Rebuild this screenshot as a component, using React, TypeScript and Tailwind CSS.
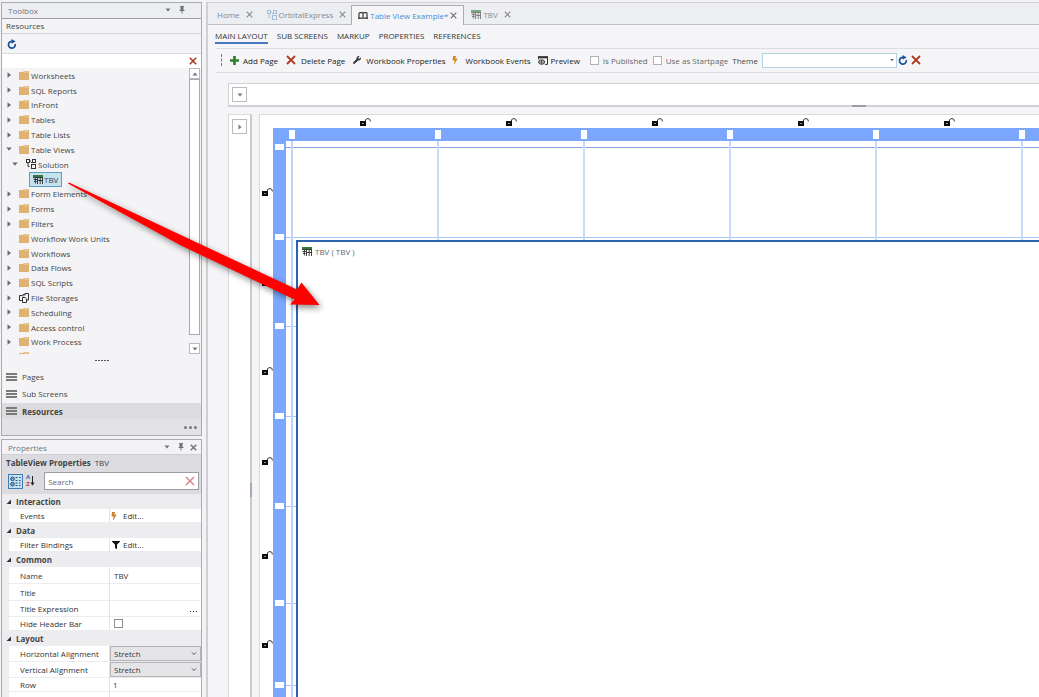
import React, { useState } from 'react';
import { FaWrench, FaBolt, FaFilter } from 'react-icons/fa';

interface TreeNode {
  label: string;
  state: 'closed' | 'open' | 'leaf';
  icon?: 'folder' | 'solution' | 'storage';
}

const TREE_TOP: TreeNode[] = [
  { label: 'Worksheets', state: 'closed' },
  { label: 'SQL Reports', state: 'closed' },
  { label: 'InFront', state: 'closed' },
  { label: 'Tables', state: 'closed' },
  { label: 'Table Lists', state: 'closed' },
  { label: 'Table Views', state: 'open' },
];

const TREE_BOTTOM: TreeNode[] = [
  { label: 'Form Elements', state: 'closed' },
  { label: 'Forms', state: 'closed' },
  { label: 'Filters', state: 'closed' },
  { label: 'Workflow Work Units', state: 'leaf' },
  { label: 'Workflows', state: 'closed' },
  { label: 'Data Flows', state: 'closed' },
  { label: 'SQL Scripts', state: 'closed' },
  { label: 'File Storages', state: 'closed', icon: 'storage' },
  { label: 'Scheduling', state: 'closed' },
  { label: 'Access control', state: 'closed' },
  { label: 'Work Process', state: 'closed' },
];

const COLUMNS = [0, 1, 2, 3, 4, 5];
const ROW_HEIGHTS = ['h-[90px]', 'h-[89px]', 'h-[90px]', 'h-[90px]', 'h-[97px]', 'h-[82px]', 'h-[90px]'];

/* ---------- icons ---------- */

const Caret = ({ className = '' }: { className?: string }) => (
  <svg viewBox="0 0 6 4" className={`h-1 w-1.5 shrink-0 ${className}`}>
    <path d="M0.5 0.5h5L3 3.5z" fill="currentColor" />
  </svg>
);

const Expander = ({ state }: { state: TreeNode['state'] }) => (
  <svg viewBox="0 0 6 6" className="h-1.5 w-1.5 shrink-0 text-[#6b6b6b]">
    {state === 'closed' && <path d="M1.5 0.3v5.4l3.5-2.7z" fill="currentColor" />}
    {state === 'open' && <path d="M0.3 1.4h5.4L3 4.8z" fill="currentColor" />}
  </svg>
);

const Folder = () => (
  <svg viewBox="0 0 10 9" className="h-[9px] w-2.5 shrink-0">
    <path d="M0 1h4l1-1h5v9H0z" fill="#e0b271" />
    <path d="M5 1h4.5" stroke="#f3ddb8" strokeWidth="0.8" />
  </svg>
);

const SolutionIcon = ({ className = 'text-[#333]' }: { className?: string }) => (
  <svg viewBox="0 0 10 10" className={`h-2.5 w-2.5 shrink-0 ${className}`} fill="none" stroke="currentColor">
    <rect x="0.5" y="0.5" width="3" height="3" />
    <rect x="6.5" y="0.5" width="3" height="3" />
    <rect x="5.5" y="5.5" width="4" height="4" />
    <path d="M3.5 2h1.5M2 4v3.5h1.5M5 3.5h1.5" />
  </svg>
);

const StorageIcon = () => (
  <svg viewBox="0 0 10 10" className="h-2.5 w-2.5 shrink-0 text-[#333]" fill="none" stroke="currentColor">
    <path d="M3.5 7.5H0.5v-5h3M4 3.5v-2M4 1.5h2" />
    <path d="M3.5 9.5v-5h2.6l1.4 1.4v3.6z" />
    <path d="M6 2.5V0.5h3.5V7H7.5" />
  </svg>
);

const TableIcon = ({ faded = false }: { faded?: boolean }) => (
  <svg viewBox="0 0 10 9" className={`h-[9px] w-2.5 shrink-0 ${faded ? 'opacity-60' : ''}`}>
    <rect width="10" height="2" fill="#2f7d3c" />
    <path d="M0 2.5h10M0.5 4.5h3.5M5 5.5h4.5M1 6.5h2.6" stroke="#2a2a2a" strokeWidth="0.9" />
    <path d="M4.5 2v7M7.2 2v7M9.5 2v7M2.4 3v5.5" stroke="#2a2a2a" strokeWidth="0.9" />
  </svg>
);

const BookIcon = () => (
  <svg viewBox="0 0 10 8" className="h-2 w-2.5 shrink-0 text-[#3a3a3a]" fill="none" stroke="currentColor">
    <path d="M1 7V1.5Q1 .7 2 .7H4Q5 .7 5 1.6Q5 .7 6 .7H8Q9 .7 9 1.5V7M5 1.4V7M0 6.2h4.2M5.8 6.2H10" strokeWidth="1.2" />
  </svg>
);

const PreviewIcon = () => (
  <svg viewBox="0 0 10 9" className="h-[9px] w-2.5 shrink-0 text-[#333]" fill="none" stroke="currentColor">
    <path d="M0 1.2h10" strokeWidth="2.2" />
    <path d="M9.5 1v7.4H7M0.5 1v2.4" />
    <ellipse cx="3.6" cy="6" rx="3" ry="2.2" />
    <path d="M0.8 6h5.6M3.6 4v4.4" strokeWidth="0.8" />
  </svg>
);

const Cross = ({ className }: { className: string }) => (
  <svg viewBox="0 0 10 10" className={`shrink-0 ${className}`} fill="none" stroke="currentColor">
    <path d="M1 1l8 8M9 1L1 9" />
  </svg>
);

const Refresh = () => (
  <svg viewBox="0 0 10 10" className="h-2.5 w-2.5 shrink-0" fill="none" stroke="#17539b" strokeWidth="1.7">
    <path d="M5.6 2.4A3.4 3.4 0 1 0 8.2 5" />
    <path d="M4.6 0v4.8L8.6 2.4z" fill="#17539b" stroke="none" />
  </svg>
);

const Pin = () => (
  <svg viewBox="0 0 6 8" className="h-2 w-1.5 shrink-0" fill="none" stroke="currentColor">
    <path d="M1 .5h4M0.5 4.5h5M3 5v2.5" />
    <path d="M2 1h2v3.4H2z" fill="currentColor" />
  </svg>
);

const Lock = () => (
  <svg viewBox="0 0 11 8" className="h-2 w-[11px] shrink-0">
    <rect x="0" y="3" width="6" height="5" fill="#0c0c0c" />
    <rect x="2" y="5" width="2" height="1" fill="#999" />
    <path d="M5.5 3.4V2Q6 .6 8 .6Q10.4.6 10.4 3.4" fill="none" stroke="#333" />
  </svg>
);

const Bars = () => (
  <span className="flex w-[11px] shrink-0 flex-col gap-px">
    <span className="h-0.5 bg-[#7a7a7a]" />
    <span className="h-0.5 bg-[#7a7a7a]" />
    <span className="h-0.5 bg-[#7a7a7a]" />
  </span>
);

/* ---------- toolbox ---------- */

const TreeRow = ({ node }: { node: TreeNode }) => (
  <li className="flex flex-1 items-center">
    <button type="button" className="flex items-center pl-1 whitespace-nowrap">
      <Expander state={node.state} />
      <span className="ml-[7px] flex items-center gap-0.5">
        {node.icon === 'storage' ? <StorageIcon /> : <Folder />}
        {node.label}
      </span>
    </button>
  </li>
);

const Toolbox = () => {
  const [filter, setFilter] = useState('');

  return (
    <section className="flex h-[434px] shrink-0 flex-col border border-[#a9abb5] bg-[#f4f4f6]">
      <header className="flex h-[15px] shrink-0 items-center bg-[#edeef2] pr-4 pb-px pl-1.5 text-[#6f7480]">
        <h2 className="flex-1">Toolbox</h2>
        <button type="button" aria-label="Menu" className="mr-2"><Caret /></button>
        <button type="button" aria-label="Pin"><Pin /></button>
      </header>
      <h3 className="flex h-4 shrink-0 items-center border-y border-t-[#9a9ca6] border-b-[#d5d6da] pb-px pl-1">Resources</h3>
      <div className="flex h-5 shrink-0 items-center border-b border-[#d9dade] pl-[5px]">
        <button type="button" aria-label="Refresh"><Refresh /></button>
      </div>
      <div className="flex h-[14px] shrink-0 items-center bg-white pr-1">
        <input
          aria-label="Filter resources"
          value={filter}
          onChange={e => setFilter(e.target.value)}
          className="h-3 min-w-0 flex-1 px-1 outline-none"
        />
        <button type="button" aria-label="Clear filter">
          <Cross className="h-2 w-2 stroke-2 text-[#a83c26]" />
        </button>
      </div>

      <div className="flex min-h-0 flex-1">
        <div className="min-w-0 flex-1 overflow-hidden">
          <ul className="flex h-[296px] flex-col">
            {TREE_TOP.map(n => <TreeRow key={n.label} node={n} />)}
            <li className="flex flex-1 items-center pl-2.5">
              <button type="button" className="flex items-center">
                <Expander state="open" />
                <span className="ml-2 flex items-center gap-0.5"><SolutionIcon />Solution</span>
              </button>
            </li>
            <li className="flex flex-1 items-center pl-[27px]">
              <button type="button" className="flex h-[15px] items-center gap-px border border-[#5d9fc4] bg-[#c5e1ee] px-[3px]">
                <TableIcon />TBV
              </button>
            </li>
            {TREE_BOTTOM.map(n => <TreeRow key={n.label} node={n} />)}
            <li className="flex flex-1 items-center pl-[17px]"><Folder /></li>
          </ul>
        </div>
        {/* Scrollbar */}
        <div className="mr-px flex w-[11px] flex-col">
          <button type="button" aria-label="Scroll up" className="flex h-[11px] items-center justify-center border border-[#b9bac0] bg-white text-[#777]">
            <Caret className="rotate-180" />
          </button>
          <div className="flex-1 border border-[#a9aab2] bg-white" />
          <button type="button" aria-label="Scroll down" className="mt-2 flex h-[11px] items-center justify-center border border-[#b9bac0] bg-white text-[#777]">
            <Caret />
          </button>
        </div>
      </div>

      <div className="flex h-[14px] shrink-0 items-center justify-center gap-px pb-0.5">
        {[0, 1, 2, 3, 4].map(i => <span key={i} className="h-px w-0.5 bg-[#555]" />)}
      </div>
      <nav className="shrink-0">
        <button type="button" className="flex h-[17px] w-full items-center gap-[5px] pl-1"><Bars />Pages</button>
        <button type="button" className="flex h-[18px] w-full items-center gap-[5px] pb-px pl-1"><Bars />Sub Screens</button>
        <button type="button" className="flex h-4 w-full items-center gap-[5px] bg-[#dcdcde] pl-1 font-bold"><Bars />Resources</button>
      </nav>
      <div className="flex h-4 shrink-0 items-center justify-end gap-0.5 bg-[#e3e3e6] pr-1">
        {[0, 1, 2].map(i => <span key={i} className="h-[3px] w-[3px] rounded-full bg-[#777]" />)}
      </div>
    </section>
  );
};

/* ---------- properties ---------- */

const Group = ({ title }: { title: string }) => (
  <h3 className="flex h-[15px] items-center gap-[5px] pl-1 font-bold">
    <svg viewBox="0 0 5 5" className="h-[5px] w-[5px]"><path d="M5 0.5v4.5H0.5z" fill="#333" /></svg>
    {title}
  </h3>
);

interface FieldProps {
  label: string;
  height: string;
  htmlFor?: string;
  children?: React.ReactNode;
}

const Field = ({ label, height, htmlFor, children }: FieldProps) => (
  <div className={`ml-[7px] flex border-b border-[#ececef] bg-white text-[#333] ${height}`}>
    <label htmlFor={htmlFor} className="flex w-[101px] shrink-0 items-center border-r border-[#e3e3e6] pl-[11px] whitespace-nowrap">
      {label}
    </label>
    <div className="flex min-w-0 flex-1 items-center">{children}</div>
  </div>
);

const AlignSelect = ({ id }: { id: string }) => (
  <div className="relative flex h-full flex-1 items-center">
    <select id={id} className="h-full w-full appearance-none border border-[#b5b5b8] bg-[#e5e5e7] pl-[3px] outline-none">
      <option>Stretch</option>
      <option>Center</option>
    </select>
    <svg viewBox="0 0 6 4" className="pointer-events-none absolute right-1 h-1 w-1.5" fill="none" stroke="#555">
      <path d="M1 .5l2 2 2-2" />
    </svg>
  </div>
);

const Properties = () => (
  <section className="flex min-h-0 flex-1 flex-col overflow-hidden border border-b-0 border-[#a9abb5] bg-[#ededf0]">
    <header className="flex h-[15px] shrink-0 items-center border-b border-[#cfd0d5] bg-[#f3f3f6] pr-1 pl-1.5 text-[#6f7480]">
      <h2 className="flex-1">Properties</h2>
      <button type="button" aria-label="Menu" className="mr-2"><Caret /></button>
      <button type="button" aria-label="Pin" className="mr-1.5"><Pin /></button>
      <button type="button" aria-label="Close"><Cross className="h-[7px] w-[7px] stroke-2" /></button>
    </header>
    <div className="shrink-0 bg-[#dcdce0]">
      <h3 className="flex h-[14px] items-center gap-1 pl-1"><b>TableView Properties</b>TBV</h3>
      <div className="flex h-[25px] items-center pr-0.5 pb-px pl-1.5">
        <button type="button" aria-label="Categorized" className="border border-[#3d7fb5] bg-[#c4e2f6] p-px">
          <svg viewBox="0 0 11 11" className="h-[11px] w-[11px]" fill="none" stroke="#1c3f63">
            <circle cx="2.5" cy="2.8" r="1.8" /><circle cx="2.5" cy="8.2" r="1.8" />
            <path d="M1.5 2.8h2M1.5 8.2h2M5.5 1.5h2M5.5 4.5h2M9 1.5h1.5M9 4.5h1.5M5.5 7h2M5.5 9.5h2M9 7h1.5M9 9.5h1.5" strokeWidth="0.9" />
          </svg>
        </button>
        <button type="button" aria-label="Sort by name" className="ml-[3px] flex items-center">
          <span className="flex flex-col text-[6px] leading-[7px] font-bold">
            <span className="text-[#3b66b0]">A</span>
            <span className="text-[#b03b3b]">Z</span>
          </span>
          <svg viewBox="0 0 5 10" className="h-2.5 w-[5px]" fill="none" stroke="#222">
            <path d="M2.5 0v8" /><path d="M.5 6.5h4L2.5 9.8z" fill="#222" stroke="none" />
          </svg>
        </button>
        <div className="ml-[9px] flex h-[18px] min-w-0 flex-1 items-center border border-[#9c9ca2] bg-white pr-[3px]">
          <input aria-label="Search" placeholder="Search" className="h-4 min-w-0 flex-1 pl-[3px] outline-none placeholder:text-[#666]" />
          <button type="button" aria-label="Clear search"><Cross className="h-2.5 w-2.5 stroke-[1.4] text-[#d98088]" /></button>
        </div>
      </div>
    </div>

    <div className="shrink-0">
      <Group title="Interaction" />
      <Field label="Events" height="h-[14px]">
        <button type="button" className="flex items-center gap-1.5 pl-px"><FaBolt className="h-2 w-1.5 text-[#c9822c]" />Edit...</button>
      </Field>
      <Group title="Data" />
      <Field label="Filter Bindings" height="h-[14px]">
        <button type="button" className="flex items-center gap-[3px] pl-0.5"><FaFilter className="h-2 w-2 text-[#111]" />Edit...</button>
      </Field>
      <Group title="Common" />
      <Field label="Name" height="h-[17px]" htmlFor="prop-name">
        <input id="prop-name" defaultValue="TBV" className="w-full bg-transparent pl-1 outline-none" />
      </Field>
      <Field label="Title" height="h-[17px]" htmlFor="prop-title">
        <input id="prop-title" className="w-full bg-transparent pl-1 outline-none" />
      </Field>
      <Field label="Title Expression" height="h-4" htmlFor="prop-expr">
        <input id="prop-expr" className="min-w-0 flex-1 bg-transparent pl-1 outline-none" />
        <button type="button" aria-label="Edit expression" className="mr-1 flex gap-0.5 pt-1.5">
          {[0, 1, 2].map(i => <span key={i} className="h-px w-px bg-[#222]" />)}
        </button>
      </Field>
      <Field label="Hide Header Bar" height="h-[14px]" htmlFor="prop-hide">
        <input id="prop-hide" type="checkbox" className="ml-1 h-[9px] w-[9px] appearance-none border border-[#8d8d92] bg-white checked:bg-[#444]" />
      </Field>
      <Group title="Layout" />
      <Field label="Horizontal Alignment" height="h-4" htmlFor="prop-h"><AlignSelect id="prop-h" /></Field>
      <Field label="Vertical Alignment" height="h-4" htmlFor="prop-v"><AlignSelect id="prop-v" /></Field>
      <Field label="Row" height="h-[14px]" htmlFor="prop-row">
        <input id="prop-row" defaultValue="1" className="w-full bg-transparent pl-[3px] outline-none" />
      </Field>
      <Field label="Column" height="h-[14px]" htmlFor="prop-col">
        <input id="prop-col" defaultValue="0" className="w-full bg-transparent pl-[3px] outline-none" />
      </Field>
    </div>
  </section>
);

/* ---------- document area ---------- */

const CloseTab = () => (
  <button type="button" aria-label="Close tab" className="ml-1.5">
    <Cross className="h-[7px] w-[7px] stroke-[1.6]" />
  </button>
);

const Tabs = () => (
  <div role="tablist" className="flex h-[22px] shrink-0 items-end border-b border-[#bfc0c7] text-[#85878f]">
    <div className="flex h-[19px] items-center pl-[9px]">
      <button type="button" role="tab">Home</button>
      <CloseTab />
    </div>
    <div className="flex h-[19px] items-center pl-3.5">
      <button type="button" role="tab" className="flex items-center gap-0.5">
        <SolutionIcon className="text-[#a3bfe0]" />OrbitalExpress
      </button>
      <CloseTab />
    </div>
    <div className="-mb-px ml-[5px] flex h-5 items-center border border-b-0 border-[#a9abb5] bg-[#f5f5f7] px-1.5">
      <button type="button" role="tab" aria-selected="true" className="flex items-center gap-0.5 text-[#3f8fd4]">
        <BookIcon />Table View Example*
      </button>
      <span className="-ml-1 flex text-[#6a6c74]"><CloseTab /></span>
    </div>
    <div className="flex h-[19px] items-center pl-[7px]">
      <button type="button" role="tab" className="flex items-center gap-0.5"><TableIcon faded />TBV</button>
      <CloseTab />
    </div>
  </div>
);

const MENU = ['MAIN LAYOUT', 'SUB SCREENS', 'MARKUP', 'PROPERTIES', 'REFERENCES'];

const Toolbar = () => (
  <div className="ml-2 flex h-[25px] shrink-0 items-center border-y border-[#dcdde1] pb-px pl-[5px] whitespace-nowrap text-[#222]">
    <span className="h-3 border-l border-dashed border-[#777]" />
    <button type="button" className="ml-2 flex items-center gap-1">
      <svg viewBox="0 0 10 10" className="h-[9px] w-[9px]"><path d="M5 0v10M0 5h10" stroke="#2f7d32" strokeWidth="3" /></svg>
      Add Page
    </button>
    <button type="button" className="ml-2 flex items-center gap-[5px]">
      <Cross className="h-2.5 w-2.5 stroke-[1.8] text-[#b03a1e]" />Delete Page
    </button>
    <button type="button" className="ml-2 flex items-center gap-[5px]">
      <FaWrench className="h-2 w-2 text-[#333]" />Workbook Properties
    </button>
    <button type="button" className="ml-1.5 flex items-center gap-2">
      <FaBolt className="h-2 w-1.5 text-[#d08a20]" />Workbook Events
    </button>
    <button type="button" className="ml-[7px] flex items-center gap-[3px]"><PreviewIcon />Preview</button>
    <label className="ml-2.5 flex items-center gap-1 text-[#666]">
      <input type="checkbox" className="h-[9px] w-[9px] appearance-none border border-[#b0b1b7] bg-white checked:bg-[#444]" />
      Is Published
    </label>
    <label className="ml-[5px] flex items-center gap-1 text-[#666]">
      <input type="checkbox" className="h-[9px] w-[9px] appearance-none border border-[#b0b1b7] bg-white checked:bg-[#444]" />
      Use as Startpage
    </label>
    <label htmlFor="theme" className="ml-1 text-[#444]">Theme</label>
    <div className="relative ml-1 flex items-center text-[#666]">
      <select id="theme" className="h-[15px] w-[135px] appearance-none border border-[#b5d2e2] bg-white outline-none">
        <option />
      </select>
      <Caret className="pointer-events-none absolute right-0.5 scale-75" />
    </div>
    <button type="button" aria-label="Reload themes" className="ml-px"><Refresh /></button>
    <button type="button" aria-label="Remove theme" className="ml-[3px]">
      <Cross className="h-2.5 w-2.5 stroke-[1.8] text-[#b03a1e]" />
    </button>
  </div>
);

const Designer = () => (
  <div className="grid min-w-0 flex-1 grid-cols-[13px_13px_minmax(0,1fr)] grid-rows-[13px_13px_minmax(0,1fr)] overflow-hidden border-t border-l border-[#d9d9de] bg-white">
    {/* Column locks */}
    <div className="col-span-3 flex overflow-hidden pl-8">
      {COLUMNS.map(c => (
        <button key={c} type="button" aria-label="Lock column" className="flex w-[146px] shrink-0 items-center justify-center"><Lock /></button>
      ))}
    </div>
    {/* Column ruler */}
    <div />
    <div className="bg-[#7ba7ff]" />
    <div className="flex items-center overflow-hidden bg-[#7ba7ff] pl-[3px]">
      {COLUMNS.map(c => (
        <div key={c} className="w-[146px] shrink-0"><div className="h-[9px] w-1.5 bg-white" /></div>
      ))}
    </div>
    {/* Row locks */}
    <div className="overflow-hidden pt-1.5">
      {ROW_HEIGHTS.map((h, i) => (
        <button key={i} type="button" aria-label="Lock row" className={`flex items-center pl-0.5 ${h}`}><Lock /></button>
      ))}
    </div>
    {/* Row ruler */}
    <div className="overflow-hidden bg-[#7ba7ff] pt-[3px]">
      {ROW_HEIGHTS.map((h, i) => (
        <div key={i} className={`pl-0.5 ${h}`}><div className="h-1.5 w-[9px] bg-white" /></div>
      ))}
    </div>
    {/* Page surface */}
    <div className="relative overflow-hidden">
      <div className="pt-1.5">
        {ROW_HEIGHTS.map((h, i) => (
          <div key={i} className={`border-t ${i === 0 ? 'border-t-[#84a5e6]' : 'border-t-[#a9c6fa]'} ${h}`} />
        ))}
      </div>
      <div className="absolute inset-y-0 left-[5px] flex">
        {COLUMNS.map(c => (
          <div key={c} className={`w-[146px] shrink-0 border-l-2 ${c === 0 ? 'border-l-[#c3d3f2]' : 'border-l-[#c9dafb]'}`} />
        ))}
      </div>
      <div className="absolute top-[99px] right-0 bottom-0 left-2.5 border-t-2 border-l-2 border-[#2a62ad] bg-white">
        <div className="flex items-center gap-[3px] pt-1 pl-1 text-[#666]"><TableIcon />TBV ( TBV )</div>
      </div>
    </div>
  </div>
);

const Workspace = () => (
  <main className="flex min-w-0 flex-1 flex-col border-t border-l-2 border-[#cfd0d6] bg-[#edeef2]">
    <Tabs />
    <div className="flex min-h-0 flex-1 flex-col bg-[#f5f5f7]">
      <nav className="flex h-[23px] shrink-0 items-center gap-[9px] pb-px pl-[7px] text-[#333]">
        {MENU.map((m, i) => (
          <a key={m} href="#" className={`border-b-2 leading-[13px] ${i === 0 ? 'border-[#4a78c0]' : 'border-transparent'}`}>{m}</a>
        ))}
      </nav>
      <Toolbar />
      <div className="mt-2.5 ml-5 flex h-6 shrink-0 flex-col items-end border-t border-b-2 border-l border-[#d0d0d6] bg-white">
        <div className="flex w-full flex-1 items-center pl-[3px]">
          <button type="button" aria-label="Expand top" className="flex h-[15px] w-[15px] items-center justify-center border border-[#bbb] bg-white text-[#777]">
            <Caret />
          </button>
        </div>
        <span className="-mb-0.5 mr-[173px] h-0.5 w-3.5 shrink-0 bg-[#9c9ca2]" />
      </div>
      <div className="mt-[7px] ml-5 flex min-h-0 flex-1">
        <div className="flex w-6 shrink-0 border-t border-r-2 border-l border-t-[#d9d9de] border-r-[#c9c9d0] border-l-[#d9d9de] bg-white">
          <button type="button" aria-label="Expand left" className="mt-1 ml-[3px] flex h-[15px] w-[15px] items-center justify-center border border-[#bbb] bg-white text-[#777]">
            <Caret className="-rotate-90" />
          </button>
          <span className="-mr-0.5 mb-[200px] ml-auto h-3.5 w-0.5 self-end bg-[#a9a9b4]" />
        </div>
        <div className="ml-[7px] flex min-w-0 flex-1"><Designer /></div>
      </div>
    </div>
  </main>
);

/* Drag hint from the tree item to the page surface */
const DragArrow = () => (
  <svg viewBox="0 0 270 140" className="pointer-events-none absolute top-[175px] left-[60px] h-[140px] w-[270px] drop-shadow-[2px_3px_3px_rgba(0,0,0,0.45)]">
    <path d="M8 8.4L9 7.6L237 114.5L241.5 107.5L259.5 130L230 129.5L234.5 124.5L120 70Z" fill="#fe0000" />
  </svg>
);

export default function App() {
  return (
    <div className="relative flex h-screen overflow-hidden bg-[#f3f3f6] pt-0.5 font-['Open_Sans','Liberation_Sans',sans-serif] text-[8px] leading-[11px] text-[#444]">
      <aside className="mr-1 ml-px flex w-[201px] shrink-0 flex-col gap-[3px]">
        <Toolbox />
        <Properties />
      </aside>
      <Workspace />
      <DragArrow />
    </div>
  );
}
